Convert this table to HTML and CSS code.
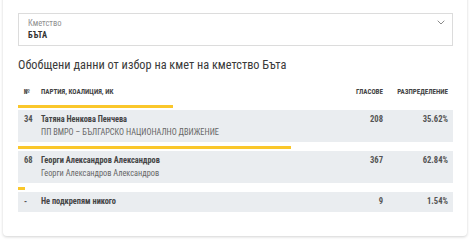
FILE: index.html
```html
<!DOCTYPE html>
<html lang="bg">
<head>
<meta charset="utf-8">
<link rel="stylesheet" href="styles.css">
</head>
<body>
<div class="page">
  <div class="card">
    <div class="select">
      <div class="select-text">
        <div class="select-label">Кметство</div>
        <div class="select-value">БЪТА</div>
      </div>
      <svg class="chevron" width="8" height="5" viewBox="0 0 8 5"><path d="M0.7 0.7 L4 4 L7.3 0.7" fill="none" stroke="#8a8a8a" stroke-width="1"/></svg>
    </div>
    <h2 class="title">Обобщени данни от избор на кмет на кметство Бъта</h2>
    <div class="table">
      <div class="thead">
        <div class="c-num">№</div>
        <div class="c-name">ПАРТИЯ, КОАЛИЦИЯ, ИК</div>
        <div class="c-votes">ГЛАСОВЕ</div>
        <div class="c-pct">РАЗПРЕДЕЛЕНИЕ</div>
      </div>
      <div class="entry">
        <div class="bar"><div class="bar-fill" style="width:35.62%"></div></div>
        <div class="row">
          <div class="c-num">34</div>
          <div class="c-name"><div class="name">Татяна Ненкова Пенчева</div><div class="sub">ПП ВМРО – БЪЛГАРСКО НАЦИОНАЛНО ДВИЖЕНИЕ</div></div>
          <div class="c-votes">208</div>
          <div class="c-pct">35.62%</div>
        </div>
      </div>
      <div class="entry">
        <div class="bar"><div class="bar-fill" style="width:62.84%"></div></div>
        <div class="row">
          <div class="c-num">68</div>
          <div class="c-name"><div class="name">Георги Александров Александров</div><div class="sub">Георги Александров Александров</div></div>
          <div class="c-votes">367</div>
          <div class="c-pct">62.84%</div>
        </div>
      </div>
      <div class="entry">
        <div class="bar"><div class="bar-fill" style="width:1.54%"></div></div>
        <div class="row row-single">
          <div class="c-num">-</div>
          <div class="c-name"><div class="name">Не подкрепям никого</div></div>
          <div class="c-votes">9</div>
          <div class="c-pct">1.54%</div>
        </div>
      </div>
    </div>
  </div>
</div>
</body>
</html>
```
FILE: styles.css
```css
html, body {
  margin: 0;
  padding: 0;
  background: #ffffff;
}
body {
  font-family: "Roboto Condensed", "Liberation Sans Narrow", Roboto, "Noto Sans", sans-serif;
  color: #444;
}
.page {
  padding: 0 3px;
  height: 240px;
  overflow: hidden;
}
.card {
  margin-top: -10px;
  height: 246px;
  box-sizing: border-box;
  background: #fff;
  border-radius: 4px;
  box-shadow: 0 1px 3px rgba(0,0,0,0.18);
  padding: 23px 14px 0 15px;
}
.select {
  display: flex;
  justify-content: space-between;
  align-items: flex-start;
  border: 1px solid #dcdcdc;
  height: 33px;
  box-sizing: border-box;
  padding: 4px 7px 0 9px;
}
.select-label {
  font-size: 8.5px;
  color: #8f8f8f;
  line-height: 11px;
}
.select-value {
  font-size: 8.5px;
  font-weight: 700;
  color: #333;
  line-height: 12px;
}
.chevron {
  margin-top: 2px;
}
.title {
  margin: 11px 0 0 0;
  font-size: 12.3px;
  font-weight: 400;
  color: #3a3a3a;
  line-height: 16px;
}
.table {
  margin-top: 14px;
}
.thead, .row {
  display: flex;
  align-items: flex-start;
}
.thead {
  font-size: 7px;
  font-weight: 700;
  color: #444;
  line-height: 10px;
  height: 10px;
}
.c-num {
  width: 17px;
  padding-left: 6px;
  flex: none;
}
.c-name {
  flex: 1;
}
.c-votes {
  width: 60px;
  text-align: right;
  flex: none;
}
.c-pct {
  width: 65px;
  text-align: right;
  padding-right: 5px;
  flex: none;
}
.thead + .entry {
  margin-top: 8px;
}
.entry + .entry {
  margin-top: 4px;
}
.bar {
  height: 3px;
}
.bar-fill {
  height: 3px;
  background: #fac72b;
}
.row {
  margin-top: 2px;
  background: #eaedf0;
  padding: 3px 0;
  font-size: 8.3px;
  line-height: 13px;
}
.row-single {
  padding: 3px 0 4px;
}
.row .c-num, .row .c-votes, .row .c-pct {
  font-weight: 700;
  color: #555;
  font-size: 8.6px;
}
.name {
  font-weight: 700;
  color: #444;
}
.sub {
  color: #666;
}
```
